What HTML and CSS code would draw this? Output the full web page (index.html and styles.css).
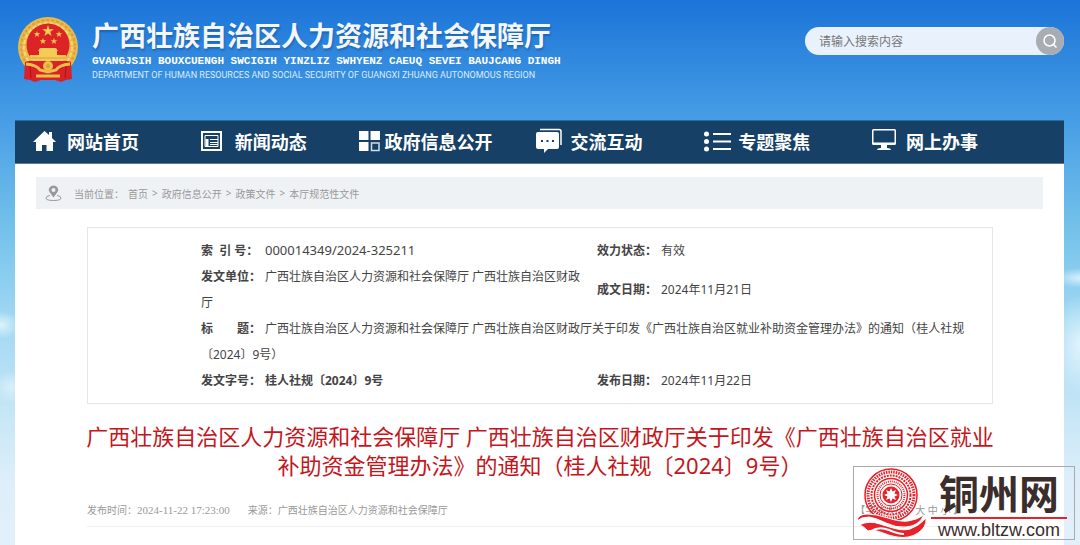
FILE: index.html
```
<!DOCTYPE html>
<html lang="zh-CN">
<head>
    <meta charset="UTF-8">
    <meta name="viewport" content="width=device-width, initial-scale=1.0">
    <title>广西壮族自治区人力资源和社会保障厅</title>
    <link rel="stylesheet" href="styles.css">
</head>
<body>
    <div class="page">
        <header class="header">
            <a href="#" class="logo">
                <svg class="emblem" viewBox="0 0 60 66" aria-hidden="true">
                    <circle cx="30" cy="31" r="30" fill="#e9b94a"/>
                    <circle cx="30" cy="31" r="27" fill="none" stroke="#d9a03a" stroke-width="2" stroke-dasharray="3 2"/>
                    <circle cx="30" cy="31" r="24" fill="none" stroke="#f7d878" stroke-width="2" stroke-dasharray="4 2"/>
                    <circle cx="30" cy="29" r="21.500" fill="#dc2426"/>
                    <g fill="#f3cb55">
                        <path d="M30 9l1.400 4.200h4.400l-3.500 2.600 1.300 4.200-3.600-2.600-3.600 2.600 1.300-4.200-3.500-2.600h4.400z"/>
                        <path d="M19 15l.8 2.200h2.400l-1.900 1.500.7 2.300-2-1.400-2 1.400.7-2.300-1.900-1.500h2.400z"/>
                        <path d="M41 15l.8 2.200h2.400l-1.900 1.500.7 2.300-2-1.400-2 1.400.7-2.300-1.900-1.500h2.400z"/>
                        <path d="M25 22l.8 2.200h2.400l-1.900 1.500.7 2.300-2-1.400-2 1.400.7-2.300-1.900-1.500h2.400z"/>
                        <path d="M36 22l.8 2.200h2.400l-1.900 1.500.7 2.300-2-1.400-2 1.400.7-2.300-1.900-1.500h2.400z"/>
                        <path d="M22 32h16l2 3h-20zM21 35h18v4h-18zM12 39h36v6h-36z"/>
                    </g>
                    <path d="M12 42h36" stroke="#d9a03a"/>
                    <path d="M7 46q8-3 14 1l9 3 9-3q6-4 14-1l1 17-6 1-5 2-6-2h-14l-6 2-5-2-6-1z" fill="#d82228"/>
                    <path d="M8 48q11 1 14 6l8 2 8-2q3-5 14-6M18 60h24" fill="none" stroke="#edbd4b" stroke-width="3"/>
                    <circle cx="30" cy="50" r="5" fill="#edbd4b"/>
                    <circle cx="30" cy="50" r="2" fill="#d9a03a"/>
                    <path d="M12 50l1 12M48 50l-1 12" stroke="#a5161d"/>
                </svg>
                <span class="logo-text">
                    <strong class="logo-cn">广西壮族自治区人力资源和社会保障厅</strong>
                    <span class="logo-za">GVANGJSIH BOUXCUENGH SWCIGIH YINZLIZ SWHYENZ CAEUQ SEVEI BAUJCANG DINGH</span>
                    <span class="logo-en">DEPARTMENT OF HUMAN RESOURCES AND SOCIAL SECURITY OF GUANGXI ZHUANG AUTONOMOUS REGION</span>
                </span>
            </a>
            <form class="search">
                <input type="text" class="search-input" placeholder="请输入搜索内容" aria-label="请输入搜索内容">
                <button type="submit" class="search-btn" aria-label="搜索">
                    <svg width="16" height="16" viewBox="0 0 16 16" fill="none" stroke="#fff" stroke-width="1.500">
                        <circle cx="7.500" cy="7.500" r="5.500"/>
                        <path d="M11 11l3.500 3.500"/>
                    </svg>
                </button>
            </form>
        </header>

        <nav class="nav">
            <a href="#" class="nav-item">
                <svg class="nav-icon" viewBox="0 0 27 26" fill="#fff">
                    <path d="M11.500 3L0 14h3v9h6v-6h4.500v6H20v-9h3l-4-4V4h-3v3z"/>
                </svg>
                <span>网站首页</span>
            </a>
            <a href="#" class="nav-item">
                <svg class="nav-icon" viewBox="0 0 27 26" fill="none" stroke="#fff">
                    <rect x="1" y="4" width="19" height="18" stroke-width="2"/>
                    <path d="M4 7.500h13v11h-13zM9 11.500h8M9 14.500h8M9 16.500h8"/>
                    <path d="M6 11v7" stroke-width="3"/>
                </svg>
                <span>新闻动态</span>
            </a>
            <a href="#" class="nav-item nav-item-tight">
                <svg class="nav-icon" viewBox="0 0 21 26" fill="#fff">
                    <path d="M0 3h9.500v9H0zM11.500 3H21v9h-9.500zM0 14h9.500v9H0z"/>
                    <path d="M12.500 15H20v7.500h-7.500z" fill="none" stroke="#d3dce5" stroke-width="1.500"/>
                </svg>
                <span>政府信息公开</span>
            </a>
            <a href="#" class="nav-item">
                <svg class="nav-icon" viewBox="0 0 27 26">
                    <path d="M4 1.500h19q2 0 2 2V17" fill="none" stroke="#fff" stroke-width="1.500"/>
                    <path d="M2 4h19q2 0 2 2v13q0 2-2 2h-9l-4 4v-4H2q-2 0-2-2V6q0-2 2-2z" fill="#fff"/>
                    <path d="M5 12h2v2H5zM10.500 12h2v2h-2zM16 12h2v2h-2z" fill="#164066"/>
                </svg>
                <span>交流互动</span>
            </a>
            <a href="#" class="nav-item">
                <svg class="nav-icon" viewBox="0 0 27 26" fill="#fff">
                    <circle cx="2.500" cy="6" r="2.500"/>
                    <circle cx="2.500" cy="13.500" r="2.500"/>
                    <circle cx="2.500" cy="21" r="2.500"/>
                    <path d="M9 5h18v2H9zM9 12.500h18v2H9zM9 20h18v2H9z"/>
                </svg>
                <span>专题聚焦</span>
            </a>
            <a href="#" class="nav-item">
                <svg class="nav-icon" viewBox="0 0 27 26" fill="#fff">
                    <path d="M1.500 1h21Q24 1 24 2.500v13q0 1.500-1.500 1.500h-21Q0 17 0 15.500v-13Q0 1 1.500 1zM1.500 2.500v12h21v-12z" fill-rule="evenodd"/>
                    <path d="M9 17h6v3q4 0 4 2H5q0-2 4-2z"/>
                </svg>
                <span>网上办事</span>
            </a>
        </nav>

        <main class="content">
            <div class="breadcrumb">
                <svg class="pin" viewBox="0 0 17 17" fill="none" stroke="#999">
                    <path d="M5 10.500Q1 11 1 13q0 2.500 7.500 2.500T16 13q0-2-4-2.500"/>
                    <path d="M8.500 12.500L4.500 7Q3 4.500 4.500 2.500 6 .5 8.500.5t4 2Q14 4.500 12.500 7zM8.500 3a2 2 0 1 0 0 4 2 2 0 1 0 0-4z" fill="#999" fill-rule="evenodd" stroke="none"/>
                </svg>
                <span>当前位置：</span>
                <a href="#">首页</a> &gt;
                <a href="#">政府信息公开</a> &gt;
                <a href="#">政策文件</a> &gt;
                <a href="#">本厅规范性文件</a>
            </div>

            <article class="article">
                <div class="info">
                    <table class="info-table">
                        <tr>
                            <td><b class="label">索&nbsp; 引 号：</b><span class="number">000014349/2024-325211</span></td>
                            <td><b class="label">效力状态：</b>有效</td>
                        </tr>
                        <tr>
                            <td><b class="label">发文单位：</b>广西壮族自治区人力资源和社会保障厅 广西壮族自治区财政厅</td>
                            <td><b class="label">成文日期：</b>2024年11月21日</td>
                        </tr>
                        <tr>
                            <td colspan="2"><b class="label">标　　题：</b>广西壮族自治区人力资源和社会保障厅 广西壮族自治区财政厅关于印发《广西壮族自治区就业补助资金管理办法》的通知（桂人社规〔2024〕9号）</td>
                        </tr>
                        <tr>
                            <td><b class="label">发文字号：</b><b>桂人社规〔2024〕9号</b></td>
                            <td><b class="label">发布日期：</b>2024年11月22日</td>
                        </tr>
                    </table>
                </div>

                <h1 class="title">广西壮族自治区人力资源和社会保障厅 广西壮族自治区财政厅关于印发《广西壮族自治区就业补助资金管理办法》的通知（桂人社规〔2024〕9号）</h1>

                <div class="meta">
                    <span>发布时间：<span class="time">2024-11-22 17:23:00</span></span>
                    <span>来源：广西壮族自治区人力资源和社会保障厅</span>
                    <span class="font-size">【字体大小：大 中 小 】</span>
                </div>
            </article>
        </main>

        <a href="#" class="watermark">
            <svg class="watermark-logo" viewBox="0 0 70 70" fill="none" stroke="#e6222b">
                <circle cx="34" cy="27" r="26" stroke-width="1.500"/>
                <circle cx="34" cy="27" r="23" stroke-width="3" stroke-dasharray="1.500 1"/>
                <circle cx="34" cy="27" r="19.500" stroke-width="2" stroke-dasharray="2 1"/>
                <circle cx="34" cy="27" r="16.500" stroke-width="1.500"/>
                <circle cx="34" cy="27" r="13.500" stroke-width="2" stroke-dasharray="1 1"/>
                <circle cx="34" cy="27" r="11"/>
                <circle cx="34" cy="27" r="8.500" fill="#e6222b" stroke="none"/>
                <path d="M34 20l1.500 3.500 3.500-1.500-1.500 3.500L41 27l-3.500 1.500L39 32l-3.500-1.500L34 34l-1.500-3.500L29 32l1.500-3.500L27 27l3.500-1.500L29 22l3.500 1.500z" fill="#fff" stroke="none"/>
                <path d="M0 53q1-7 10-7 9 0 21 4 12 4 20 3 8-1 16-6-5 11-18 12-10 1-20-4-10-5-17-6-8 0-12 4z" fill="#e6222b" stroke="#fff"/>
                <path d="M2 57q10-5 21-1 6 2 13 4 10 3 17 1 9-3 16-11 1 9-8 15-9 6-21 4-7-1-14-4-9-4-15-2-6-6-9-6z" fill="#e6222b" stroke="#fff"/>
                <path d="M14 63q8-5 18-1 9 4 15 4" stroke="#fff" stroke-width="2"/>
            </svg>
            <span class="watermark-text">
                <strong class="watermark-name">铜州网</strong>
                <span class="watermark-url">www.bltzw.com</span>
            </span>
        </a>
    </div>
</body>
</html>
```
FILE: styles.css
```
* {
    margin: 0;
    padding: 0;
    box-sizing: border-box;
}

body {
    font-family: "Noto Sans", "Noto Sans CJK SC", sans-serif;
    font-size: 12px;
    color: #444;
    background:
        radial-gradient(ellipse 22px 14px at 0 325px, rgba(235, 250, 255, 0.8), transparent),
        radial-gradient(ellipse 20px 16px at 12px 387px, rgba(235, 248, 255, 0.6), transparent),
        radial-gradient(ellipse 26px 10px at 100% 278px, rgba(235, 248, 255, 0.8), transparent),
        radial-gradient(ellipse 30px 50px at 100% 345px, rgba(240, 250, 255, 0.8), transparent),
        linear-gradient(#1b74d8 0, #459ce5 115px, #70bfea 220px, #9bd6f2 310px, #c5e6f6 410px, #ddeefa 480px, #e2f0fa 545px);
}

a {
    color: inherit;
    text-decoration: none;
}

.page {
    position: relative;
    display: flex;
    flex-direction: column;
    min-height: 100vh;
    padding: 0 16px 0 15px;
}

/* 头部 */
.header {
    display: flex;
    justify-content: space-between;
    align-items: flex-start;
    height: 120px;
}

.logo {
    display: flex;
    gap: 14px;
    padding: 16px 0 0 3px;
    color: #fff;
}

.emblem {
    width: 60px;
    height: 66px;
}

.logo-text {
    display: flex;
    flex-direction: column;
    white-space: nowrap;
}

.logo-cn {
    font-family: "Noto Sans CJK SC", sans-serif;
    font-size: 27px;
    font-weight: 700;
    line-height: 38px;
    color: #f4f6f8;
    text-shadow: 1px 2px 2px rgba(0, 40, 100, 0.3);
}

.logo-za {
    font-family: "Liberation Mono", monospace;
    font-size: 11px;
    font-weight: bold;
    line-height: 14px;
}

.logo-en {
    font-family: Roboto, sans-serif;
    font-size: 9px;
    line-height: 14px;
    color: #dcebfa;
}

.search {
    display: flex;
    width: 259px;
    height: 28px;
    margin-top: 27px;
    background: #e9f2fc;
    border-radius: 14px;
}

.search-input {
    flex: 1;
    min-width: 0;
    padding-left: 14px;
    border: none;
    outline: none;
    background: none;
    font-family: inherit;
    font-size: 12px;
    color: #444;
}

.search-input::placeholder {
    color: #777;
}

.search-btn {
    display: flex;
    align-items: center;
    justify-content: center;
    width: 28px;
    height: 28px;
    border: none;
    border-radius: 50%;
    background: #a8acb3;
    cursor: pointer;
}

/* 导航 */
.nav {
    display: grid;
    grid-template-columns: repeat(6, 1fr);
    gap: 26px;
    height: 44px;
    padding: 0 68px 2px 0;
    background: #164066;
    border-top: 1px solid #2b6b9e;
    border-bottom: 1px solid #5c7a96;
}

.nav-item {
    display: flex;
    align-items: center;
    justify-content: center;
    gap: 7px;
    color: #fff;
    font-size: 18px;
    font-weight: bold;
    white-space: nowrap;
}

.nav-item-tight {
    justify-content: flex-end;
    gap: 4px;
}

.nav-icon {
    width: 27px;
    height: 26px;
    flex-shrink: 0;
}

.nav-item-tight .nav-icon {
    width: 21px;
}

/* 正文 */
.content {
    flex: 1;
    padding: 13px 21px 0;
    background: #fff;
}

.breadcrumb {
    display: flex;
    align-items: center;
    gap: 4px;
    height: 32px;
    padding-left: 9px;
    background: #eff2f5;
    font-size: 10px;
    color: #999;
}

.pin {
    width: 17px;
    height: 17px;
    margin-right: 8px;
}

.article {
    padding: 18px 50px 0 51px;
}

.info {
    padding: 9px 10px 9px 113px;
    border: 1px solid #e6e6e6;
}

.info-table {
    width: 100%;
    table-layout: fixed;
    border-collapse: collapse;
    line-height: 26px;
}

.info-table td:first-child:not([colspan]) {
    width: 396px;
    padding-right: 10px;
}

.label {
    display: inline-block;
    min-width: 64px;
}

.number {
    font-size: 13px;
}

.title {
    margin: 18px -5px 0;
    font-size: 22px;
    font-weight: normal;
    line-height: 29px;
    text-align: center;
    color: #c4161c;
}

.meta {
    display: flex;
    gap: 18px;
    margin-top: 20px;
    padding: 0 30px 6px 0;
    border-bottom: 1px solid #f0f0f0;
    font-size: 10px;
    line-height: 20px;
    color: #999;
}

.time {
    font-family: "Liberation Serif", serif;
    font-size: 11px;
}

.font-size {
    margin-left: auto;
}

/* 水印 */
.watermark {
    position: absolute;
    right: 5px;
    bottom: 5px;
    display: flex;
    gap: 4px;
    width: 222px;
    height: 74px;
    padding: 1px 7px 0 3px;
    border: 1px solid #aaa;
    color: #3a2d2c;
}

.watermark-logo {
    width: 70px;
    height: 70px;
    flex-shrink: 0;
}

.watermark-text {
    display: flex;
    flex: 1;
    flex-direction: column;
    text-align: center;
}

.watermark-name {
    border-bottom: 2px solid #e6222b;
    font-family: "Noto Sans CJK SC", sans-serif;
    font-size: 40px;
    font-weight: 700;
    line-height: 49px;
}

.watermark-url {
    font-family: "Liberation Sans", sans-serif;
    font-size: 18px;
    line-height: 22px;
}
```
